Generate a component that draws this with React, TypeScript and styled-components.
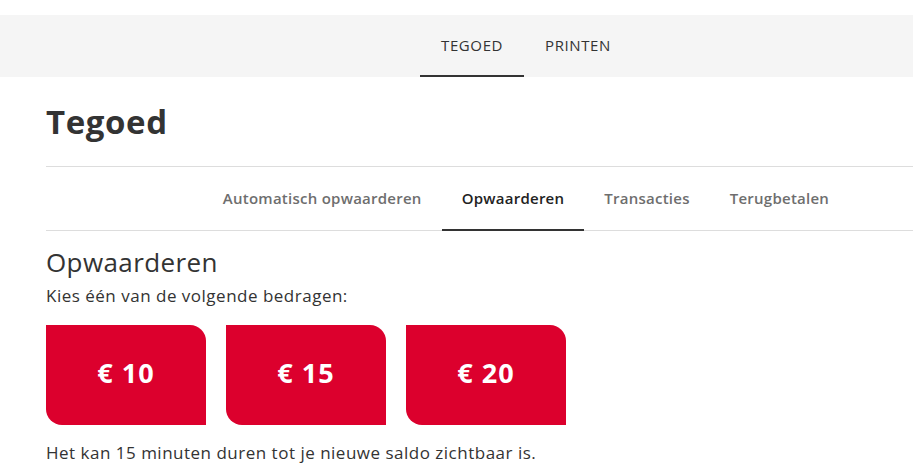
import { FC, useState } from "react";
import styled, { createGlobalStyle } from "styled-components";

const GlobalStyle = createGlobalStyle`
  body {
    margin: 0;
    overflow: hidden;
    background: #fff;
    font-family: "Open Sans", "Liberation Sans", sans-serif;
    color: #333;
  }
`;

const Page = styled.div`
  width: 1052px;
  padding-top: 15px;
`;

const TopBar = styled.nav`
  height: 62px;
  background: #f5f5f5;
  display: flex;
  justify-content: center;
`;

const TopItem = styled.a<{ active?: boolean }>`
  display: flex;
  align-items: center;
  padding: 0 21px;
  font-size: 15px;
  letter-spacing: 0.6px;
  color: #333;
  text-decoration: none;
  border-bottom: 2px solid ${({ active }) => (active ? "#333" : "transparent")};
  box-sizing: border-box;
  cursor: pointer;
`;

const Content = styled.main`
  margin-left: 46px;
  width: 960px;
`;

const Title = styled.h1`
  margin: 0;
  height: 89px;
  display: flex;
  align-items: center;
  font-size: 33px;
  font-weight: 700;
  letter-spacing: 0.6px;
  color: #333;
  border-bottom: 1px solid #ddd;
`;

const SubTabs = styled.div`
  height: 63px;
  display: flex;
  justify-content: center;
  border-bottom: 1px solid #ddd;
`;

const SubTab = styled.a<{ active?: boolean }>`
  display: flex;
  align-items: center;
  padding: 0 20px 1px;
  font-size: 15px;
  font-weight: 600;
  letter-spacing: 0.25px;
  color: ${({ active }) => (active ? "#222" : "#6e6e6e")};
  border-bottom: 2px solid ${({ active }) => (active ? "#333" : "transparent")};
  margin-bottom: -1px;
  cursor: pointer;
`;

const Heading = styled.h2`
  margin: 15px 0 0;
  font-size: 26px;
  font-weight: 400;
  letter-spacing: 0.4px;
  line-height: 32px;
  color: #333;
`;

const Text = styled.p<{ gap?: number }>`
  margin: ${({ gap }) => gap ?? 0}px 0 0;
  font-size: 17px;
  letter-spacing: 0.5px;
  line-height: 24px;
  color: #333;
`;

const Amounts = styled.div`
  display: flex;
  gap: 20px;
  margin-top: 17px;
`;

const AmountButton = styled.button<{ selected?: boolean }>`
  width: 160px;
  height: 100px;
  padding: 0 0 5px;
  border: none;
  border-radius: 0 16px 0 16px;
  background: ${({ selected }) => (selected ? "#b80026" : "#dc002d")};
  color: #fff;
  font-family: "Open Sans", "Liberation Sans", sans-serif;
  font-size: 27px;
  font-weight: 700;
  letter-spacing: 1px;
  cursor: pointer;
`;

const amounts = [10, 15, 20];
const subTabs = ["Automatisch opwaarderen", "Opwaarderen", "Transacties", "Terugbetalen"];

const App: FC = () => {
  const [selected, setSelected] = useState<number | null>(null);

  return (
    <Page>
      <GlobalStyle />
      <TopBar>
        <TopItem active>TEGOED</TopItem>
        <TopItem>PRINTEN</TopItem>
      </TopBar>
      <Content>
        <Title>Tegoed</Title>
        <SubTabs>
          {subTabs.map((tab) => (
            <SubTab key={tab} active={tab === "Opwaarderen"}>
              {tab}
            </SubTab>
          ))}
        </SubTabs>
        <Heading>Opwaarderen</Heading>
        <Text gap={6}>Kies één van de volgende bedragen:</Text>
        <Amounts>
          {amounts.map((a) => (
            <AmountButton key={a} selected={selected === a} onClick={() => setSelected(a)}>
              € {a}
            </AmountButton>
          ))}
        </Amounts>
        <Text gap={16}>Het kan 15 minuten duren tot je nieuwe saldo zichtbaar is.</Text>
      </Content>
    </Page>
  );
};

export default App;
